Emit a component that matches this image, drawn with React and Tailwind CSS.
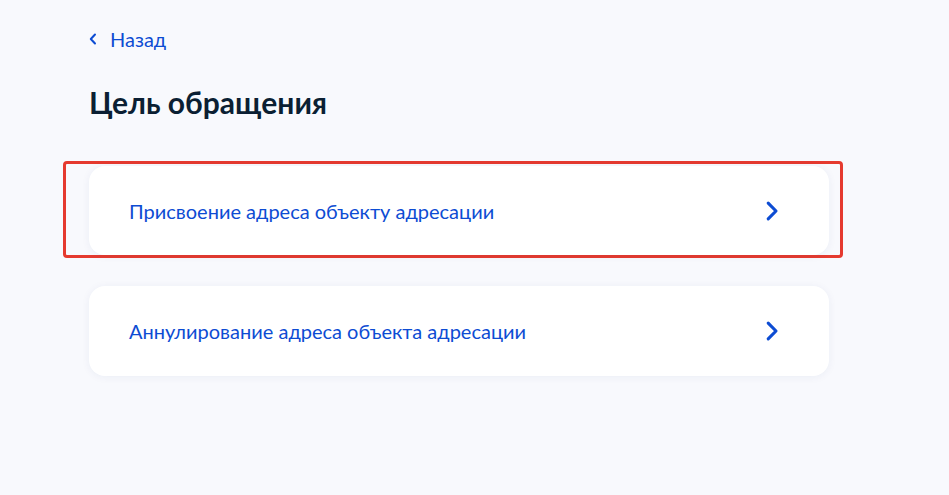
export default function App() {
  const Chevron = () => (
    <svg width="13" height="20" viewBox="0 0 13 20" fill="none">
      <path d="M2.2 2.2l7.8 7.8-7.8 7.8" stroke="#0d4cd3" strokeWidth="3.1" strokeLinecap="round" strokeLinejoin="round" />
    </svg>
  );
  return (
    <div className="min-h-[495px] w-full bg-[#f8f9fd] pl-[89px] pt-[26px] font-['Lato','Noto_Sans',sans-serif]">
      <div className="flex items-center gap-[13px] text-[#0d4cd3] text-[20px] leading-[26px]">
        <svg width="8" height="12" viewBox="0 0 8 12" fill="none">
          <path d="M6 1.5L1.8 6 6 10.5" stroke="#0d4cd3" strokeWidth="2" strokeLinecap="round" strokeLinejoin="round" />
        </svg>
        <span>Назад</span>
      </div>
      <h1 className="mt-[32px] text-[30px] leading-[36px] font-bold text-[#0b1f33]">Цель обращения</h1>
      <div className="mt-[46px] flex w-[740px] flex-col gap-[31px]">
        <div className="relative">
          <div className="absolute -left-[26px] -right-[14px] -top-[5px] -bottom-[3px] rounded-[4px] border-[3px] border-[#e53a2f]"></div>
          <div className="relative flex h-[89px] items-center justify-between rounded-[16px] bg-white pl-[40px] pr-[50px] shadow-[0_1px_8px_rgba(12,50,120,0.06)]">
            <span className="text-[20px] text-[#0d4cd3]">Присвоение адреса объекту адресации</span>
            <Chevron />
          </div>
        </div>
        <div className="flex h-[90px] items-center justify-between rounded-[16px] bg-white pl-[40px] pr-[50px] shadow-[0_1px_8px_rgba(12,50,120,0.06)]">
          <span className="text-[20px] text-[#0d4cd3]">Аннулирование адреса объекта адресации</span>
          <Chevron />
        </div>
      </div>
    </div>
  );
}
